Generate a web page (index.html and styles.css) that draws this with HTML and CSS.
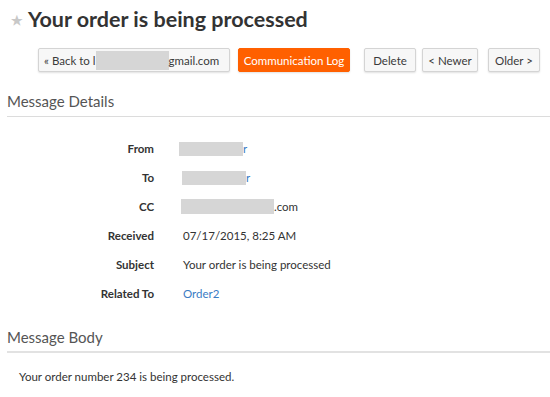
FILE: index.html
```html
<!DOCTYPE html>
<html>
<head>
<meta charset="utf-8">
<link rel="stylesheet" href="styles.css">
</head>
<body>
<div class="page">
  <h1 class="title"><span class="star">★</span>Your order is being processed</h1>
  <div class="toolbar">
    <button class="btn btn-back">« Back to l<span class="redact r-back"></span>gmail.com</button>
    <button class="btn btn-primary">Communication Log</button>
    <button class="btn btn-delete">Delete</button>
    <button class="btn btn-newer">&lt; Newer</button>
    <button class="btn btn-older">Older &gt;</button>
  </div>
  <h2 class="section">Message Details</h2>
  <div class="details">
    <div class="lbl">From</div><div class="val"><span class="redact r-from"></span><span class="link">r</span></div>
    <div class="lbl">To</div><div class="val"><span class="redact r-to"></span><span class="link">r</span></div>
    <div class="lbl">CC</div><div class="val"><span class="redact r-cc"></span>.com</div>
    <div class="lbl">Received</div><div class="val">07/17/2015, 8:25 AM</div>
    <div class="lbl">Subject</div><div class="val">Your order is being processed</div>
    <div class="lbl">Related To</div><div class="val"><span class="link">Order2</span></div>
  </div>
  <h2 class="section section-body">Message Body</h2>
  <p class="body-text">Your order number 234 is being processed.</p>
</div>
</body>
</html>
```
FILE: styles.css
```css
html, body {
  margin: 0;
  padding: 0;
  background: #fff;
}
body {
  font-family: Lato, "Open Sans", sans-serif;
  color: #333;
}
.page {
  padding: 0 0 0 7px;
}
.title {
  margin: 0;
  padding-top: 4px;
  font-size: 21.5px;
  font-weight: 700;
  color: #333;
  line-height: 26px;
  display: flex;
  align-items: center;
}
.star {
  font-size: 13px;
  color: #c8c8c8;
  margin: 3px 5px 0 4px;
}
.toolbar {
  display: flex;
  margin-top: 15px;
  padding-left: 31px;
  height: 24px;
}
.btn {
  font-family: Lato, sans-serif;
  font-size: 11.5px;
  height: 24px;
  padding: 0 6px;
  border: 1px solid #d4d4d4;
  background: #f7f7f7;
  color: #3a3a3a;
  border-radius: 2px;
  box-shadow: 0 1px 2px rgba(0,0,0,0.12);
  display: flex;
  align-items: center;
  white-space: nowrap;
}
.btn-back { width: 192px; padding-left: 5px; }
.btn-primary {
  background: #ff6000;
  border-color: #ff6000;
  color: #fff;
  margin-left: 8px;
  width: 112px;
  justify-content: center;
  padding: 0;
}
.btn-delete { margin-left: 14px; width: 52px; justify-content: center; padding: 0; }
.btn-newer { margin-left: 6px; width: 56px; justify-content: center; padding: 0; }
.btn-older { margin-left: 10px; width: 52px; justify-content: center; padding: 0; }
.redact {
  display: inline-block;
  background: #d6d6d6;
  vertical-align: middle;
}
.r-back { width: 73px; height: 19px; margin-left: 0; }
.section {
  margin: 20px 0 0 0;
  font-size: 15px;
  font-weight: 400;
  color: #555;
  line-height: 18px;
  padding-bottom: 6px;
  border-bottom: 1px solid #dcdcdc;
}
.details {
  display: grid;
  grid-template-columns: 147px auto;
  column-gap: 29px;
  row-gap: 0;
  margin-top: 17px;
  font-size: 11.5px;
  line-height: 29px;
}
.lbl {
  text-align: right;
  font-weight: 700;
  color: #333;
}
.val {
  color: #333;
  display: flex;
  align-items: center;
}
.link { color: #3a7cc4; }
.r-from { width: 64px; height: 14px; margin-left: -4px; }
.r-to { width: 64px; height: 14px; margin-left: -1px; }
.r-cc { width: 93px; height: 15px; margin-left: -2px; }
.section-body {
  margin-top: 20px;
  border-bottom: 2px solid #e2e2e2;
  padding-bottom: 5px;
}
.body-text {
  margin: 17px 0 0 12px;
  font-size: 11.5px;
  color: #333;
}
```
